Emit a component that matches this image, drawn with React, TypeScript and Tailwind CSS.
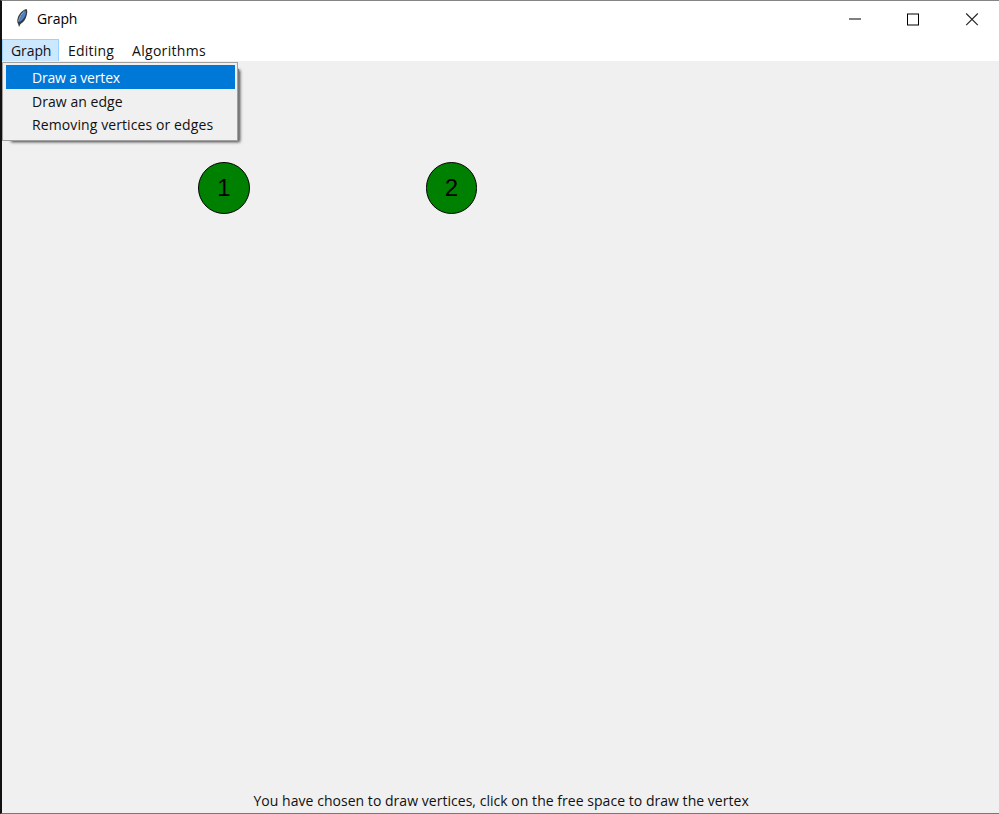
import React from "react";

const menus = [
  { label: "Graph", box: "w-[57px] pl-[8px] bg-[#cce8ff] border border-[#99d1ff]", spacing: "leading-[22px] tracking-[-0.1px]" },
  { label: "Editing", box: "w-[64px] pl-[9px]", spacing: "leading-[24px] tracking-[0.2px]" },
  { label: "Algorithms", box: "w-[92px] pl-[9px]", spacing: "leading-[24px] tracking-[0.3px]" },
];

const items = [
  { label: "Draw a vertex", style: "bg-[#0078d7] leading-[25px] text-white tracking-[-0.18px]" },
  { label: "Draw an edge", style: "text-[#111] leading-[25px] tracking-[0.05px]" },
  { label: "Removing vertices or edges", style: "text-[#111] leading-[24px] tracking-[0.1px]" },
];

const vertices = [
  { id: 1, place: "left-[196.3px] top-[101px]" },
  { id: 2, place: "left-[423.7px] top-[101px]" },
];

function Feather() {
  return (
    <svg width="12" height="20" viewBox="0 0 12 20" className="shrink-0">
      <path d="M10.500 1C8 1.500 3.800 4.500 2 9C1 12 1 14.500 2.200 16L3 19L4.500 16C7.500 14.500 9.500 11.500 10.500 8C11.500 5 11.500 2.500 10.500 1Z" fill="#303844" />
      <path d="M9.800 2.500C7 4 4 8 3.200 14.500C6.500 12.500 8.800 9.500 9.800 6Z" fill="#4a82c4" />
      <path d="M8.500 3C5.500 5.500 3.300 9 2.600 13.500" stroke="#b9c7d6" strokeWidth="0.9" fill="none" />
    </svg>
  );
}

function TitleBar() {
  return (
    <header className="flex h-[38px] shrink-0 items-start bg-white">
      <div className="flex pl-[14px] pt-[7px]">
        <Feather />
        <span className="ml-[9px] text-[14px] leading-[22px] tracking-[-0.1px] text-black">Graph</span>
      </div>
      <svg width="132" height="14" viewBox="0 0 132 14" className="ml-auto mr-[20px] mt-[11px]" shapeRendering="crispEdges">
        <rect x="2" y="6" width="12" height="2" fill="#808080" />
        <rect x="60" y="1" width="12" height="2" fill="#808080" />
        <rect x="60" y="12" width="12" height="2" fill="#808080" />
        <path d="M60.500 2V13M71.500 2V13" stroke="#000" />
        <path d="M119.200 1.500L130.800 13.200M130.800 1.500L119.200 13.200" stroke="#222" strokeWidth="1.100" shapeRendering="auto" />
      </svg>
    </header>
  );
}

export default function App() {
  return (
    <div className="flex h-[814px] w-[999px] flex-col overflow-hidden border-b border-l-2 border-t border-b-[#777] border-l-[#111] border-t-[#858585] bg-[#f0f0f0] font-['Open_Sans','Noto_Sans',sans-serif] text-[14px] text-[#111]">
      <TitleBar />
      <nav className="flex h-[22px] shrink-0 bg-white">
        {menus.map((m) => (
          <div key={m.label} className={`h-[24px] whitespace-nowrap ${m.box} ${m.spacing}`}>
            {m.label}
          </div>
        ))}
      </nav>
      <main className="relative flex-1 bg-[#f0f0f0]">
        <div className="absolute left-[8px] top-[8px] h-[72px] w-[229px] bg-[#777] shadow-[1px_1px_3px_0_rgba(0,0,0,0.75)]" />
        <div className="absolute left-0 top-[1px] h-[79px] w-[236px] border border-[#a0a0a0] bg-[#f0f0f0] py-[2px] pl-[3px]">
          {items.map((item) => (
            <div
              key={item.label}
              className={`h-[24px] w-[229px] whitespace-nowrap pl-[26px] ${item.style}`}
            >
              {item.label}
            </div>
          ))}
        </div>
        {vertices.map((v) => (
          <div
            key={v.id}
            className={`absolute flex h-[51.5px] w-[51.5px] items-center justify-center rounded-full border border-black bg-[#008000] font-['Liberation_Sans',Arial,sans-serif] text-[24px] leading-none text-black ${v.place}`}
          >
            {v.id}
          </div>
        ))}
      </main>
      <footer className="h-[24px] shrink-0 whitespace-nowrap pl-[251.5px] leading-[23px] tracking-[0.035px]">
        You have chosen to draw vertices, click on the free space to draw the vertex
      </footer>
    </div>
  );
}
